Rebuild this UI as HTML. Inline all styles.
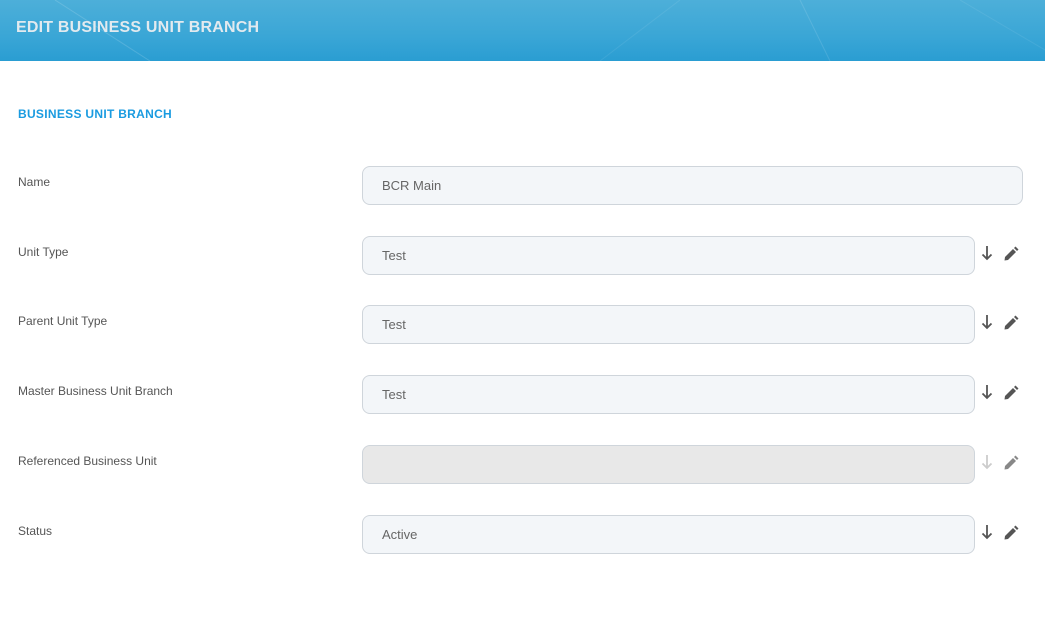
<!DOCTYPE html>
<html><head><style>
body{margin:0;width:1045px;height:586px;background:#fff;font-family:"Liberation Sans",sans-serif;position:relative;overflow:hidden}
.hdr{position:absolute;left:0;top:0;width:1045px;height:61px;background:linear-gradient(180deg,#4dafd9 0%,#3aa6d6 60%,#2a9dd2 100%);overflow:hidden}
.hdr h1{position:absolute;left:16px;top:19px;margin:0;font-size:16px;font-weight:bold;color:#e2eaef;letter-spacing:0.2px}
.sec{position:absolute;left:18px;top:107px;font-size:12px;font-weight:bold;color:#1a9be0;letter-spacing:0.3px}
.lbl{position:absolute;left:18px;font-size:12px;color:#555}
.in{position:absolute;left:362px;height:37px;border:1px solid #cfd5db;border-radius:8px;background:#f3f6f9;box-sizing:content-box;font-size:13px;color:#666;line-height:37px;padding-left:19px}
.dis{background:#e8e8e8}
</style></head><body>
<div class="hdr"><svg width="1045" height="61" style="position:absolute;left:0;top:0"><path d="M55 0 L150 61" stroke="rgba(255,255,255,0.15)" stroke-width="1"/><path d="M600 61 L680 0" stroke="rgba(255,255,255,0.08)"/><path d="M800 0 L830 61" stroke="rgba(255,255,255,0.12)"/><path d="M960 0 L1045 50" stroke="rgba(255,255,255,0.08)"/></svg><h1>EDIT BUSINESS UNIT BRANCH</h1></div>
<div class="sec">BUSINESS UNIT BRANCH</div>

<div class="lbl" style="top:175px">Name</div>
<div class="in" style="top:166px;width:640px">BCR Main</div>

<div class="lbl" style="top:245px">Unit Type</div>
<div class="in" style="top:236px;width:592px">Test</div>

<div class="lbl" style="top:314px">Parent Unit Type</div>
<div class="in" style="top:305px;width:592px">Test</div>

<div class="lbl" style="top:384px">Master Business Unit Branch</div>
<div class="in" style="top:375px;width:592px">Test</div>

<div class="lbl" style="top:454px">Referenced Business Unit</div>
<div class="in dis" style="top:445px;width:592px"></div>

<div class="lbl" style="top:524px">Status</div>
<div class="in" style="top:515px;width:592px">Active</div>

<svg width="66" height="400" style="position:absolute;left:979px;top:230px">
<defs>
<g id="ar"><path d="M8 16 V29 M3.5 24.5 L8 29 L12.5 24.5" fill="none" stroke-width="1.8"/></g>
<g id="pn"><path d="M26 27 L34 19 L37 22 L29 30 L25.5 30.5 Z" /><path d="M35 18 L36.5 16.5 L39.5 19.5 L38 21 Z"/></g>
</defs>
<g stroke="#555" fill="#555">
<use href="#ar" y="0"/><use href="#pn" y="0" stroke="none"/>
<use href="#ar" y="69"/><use href="#pn" y="69" stroke="none"/>
<use href="#ar" y="139"/><use href="#pn" y="139" stroke="none"/>
<use href="#ar" y="279"/><use href="#pn" y="279" stroke="none"/>
</g>
<g stroke="#ccc" fill="#888"><use href="#ar" y="209"/><use href="#pn" y="209" stroke="none"/></g>
</svg>
</body></html>
